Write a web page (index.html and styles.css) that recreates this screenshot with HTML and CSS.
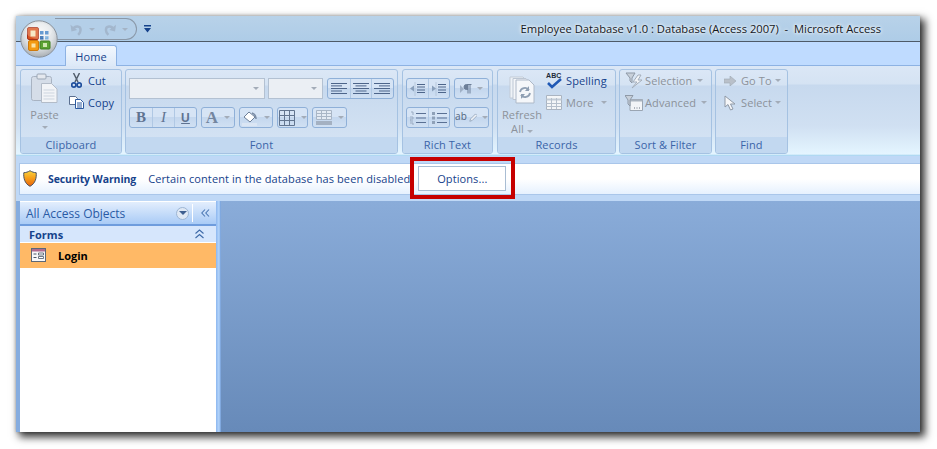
FILE: index.html
```html
<!DOCTYPE html>
<html lang="en">
<head>
<meta charset="utf-8">
<title>Employee Database v1.0</title>
<link rel="stylesheet" href="styles.css">
</head>
<body>
<div class="window">
  <div class="office-btn">
    <svg width="38" height="38" viewBox="0 0 38 38">
      <defs>
        <radialGradient id="orb" cx="50%" cy="35%" r="65%"><stop offset="0" stop-color="#fafafa"/><stop offset=".6" stop-color="#dfe3e6"/><stop offset="1" stop-color="#a9aeb3"/></radialGradient>
      </defs>
      <circle cx="19" cy="19" r="18.2" fill="url(#orb)" stroke="#8a929b"/>
      <rect x="7.500" y="7.500" width="11" height="12" rx="1.500" fill="#d9521c" stroke="#a8321a"/>
      <rect x="10.500" y="10.500" width="5" height="6" fill="#f5e3b8"/>
      <rect x="20" y="11" width="3.500" height="3.500" fill="#3d7fc4"/><rect x="25" y="11" width="3.500" height="3.500" fill="#3d7fc4"/>
      <rect x="20" y="16" width="3.500" height="3.500" fill="#1f5ea8"/><rect x="25" y="16" width="3.500" height="3.500" fill="#7fb2de"/>
      <rect x="8.500" y="20.500" width="10" height="10" rx="1.500" fill="#f39a12" stroke="#cf7a0c"/>
      <rect x="11.500" y="23.500" width="4" height="4" fill="#fbe3a6"/>
      <rect x="20" y="21" width="10" height="8" rx="1" fill="#5ba332" stroke="#3f7d20"/>
      <rect x="23" y="23" width="4" height="4" fill="#cfe8b0"/>
      <ellipse cx="19" cy="11" rx="13" ry="8" fill="#fff" opacity=".22"/>
    </svg>
  </div>

  <header class="titlebar">
    <div class="qat">
      <svg class="qat-icon" width="13" height="13" viewBox="0 0 13 13"><path d="M3.500 6C5 2.500 11 2.500 11 7c0 2-1 3.500-2.500 5" fill="none" stroke="#a3b7cd" stroke-width="2.600"/><path d="M.5 1.500l1 7 6-1.500z" fill="#a3b7cd"/></svg>
      <span class="qat-drop"></span>
      <svg class="qat-icon qat-redo" width="13" height="13" viewBox="0 0 13 13"><path d="M9.500 6C8 2.500 2 2.500 2 7c0 2 1 3.500 2.500 5" fill="none" stroke="#a3b7cd" stroke-width="2.600"/><path d="M12.500 1.500l-1 7-6-1.500z" fill="#a3b7cd"/></svg>
      <span class="qat-drop"></span>
    </div>
    <svg class="customize" width="7" height="8" viewBox="0 0 7 8"><path d="M0 0h7v1.500H0zM0 3h7L3.500 7.500z" fill="#15428b"/></svg>
    <div class="title">Employee Database v1.0 : Database (Access 2007)&nbsp; -&nbsp; Microsoft Access</div>
  </header>

  <nav class="tabs"><div class="tab">Home</div></nav>

  <section class="ribbon">
    <div class="group g-clip">
      <div class="g-body clip-body">
        <div class="big">
          <svg width="27" height="30" viewBox="0 0 27 30"><rect x=".5" y="3.500" width="20" height="24" rx="2" fill="#d5dde8" stroke="#a8b3c2"/><rect x="6" y="1" width="9" height="5" rx="1" fill="#e4e8ee" stroke="#9aa6b5"/><path d="M10.500 10.500h10l5.500 5.500v13.500H10.500z" fill="#f2f4f7" stroke="#b3bcc8"/><path d="M12.500 17h11M12.500 20h11M12.500 23h11M12.500 26h11" stroke="#cdd5df"/></svg>
          <span class="dis paste-l">Paste</span>
          <span class="caret c-paste"></span>
        </div>
        <div class="stack">
          <div class="item"><span class="ico"><svg width="11" height="15" viewBox="0 0 11 15"><path d="M2.500 0l4.500 9M8.500 0L4 9" stroke="#55606e" stroke-width="1.500"/><circle cx="2.800" cy="12" r="2.100" fill="none" stroke="#1e4e9c" stroke-width="1.700"/><circle cx="8.200" cy="12" r="2.100" fill="none" stroke="#1e4e9c" stroke-width="1.700"/></svg></span><span class="act">Cut</span></div>
          <div class="item"><span class="ico"><svg width="15" height="14" viewBox="0 0 15 14"><path d="M.5 1.500h6l2 2v6h-8z" fill="#fff" stroke="#5b6f90"/><path d="M6.500 4.500h5l3 3v6h-8z" fill="#fff" stroke="#2c5aa0"/><path d="M8 8h5M8 10h5M8 12h5" stroke="#2c5aa0"/></svg></span><span class="act">Copy</span></div>
        </div>
      </div>
      <div class="g-label">Clipboard</div>
    </div>

    <div class="group g-font">
      <div class="g-body col">
        <div class="row">
          <div class="combo c-name"><span class="caret"></span></div>
          <div class="combo c-size"><span class="caret"></span></div>
          <div class="btn">
            <span class="seg s-al"><svg width="16" height="12" viewBox="0 0 16 12"><path d="M0 .5h16M0 2.900h11M0 5.500h16M0 8h11M0 10.500h16" stroke="#4d658a"/></svg></span>
            <span class="seg s-al"><svg width="16" height="12" viewBox="0 0 16 12"><path d="M0 .5h16M2.500 2.900h11M0 5.500h16M2.500 8h11M0 10.500h16" stroke="#4d658a"/></svg></span>
            <span class="seg s-al"><svg width="16" height="12" viewBox="0 0 16 12"><path d="M0 .5h16M5 2.900h11M0 5.500h16M5 8h11M0 10.500h16" stroke="#4d658a"/></svg></span>
          </div>
        </div>
        <div class="row">
          <div class="btn">
            <span class="seg s-fmt fb">B</span>
            <span class="seg s-fmt fi">I</span>
            <span class="seg s-fmt fu">U</span>
          </div>
          <div class="btn w-a"><span class="big-a">A</span><span class="caret"></span></div>
          <div class="btn w-a">
            <svg width="16" height="16" viewBox="0 0 16 16"><path d="M2 7l5-5 6 5-5 5z" fill="#fff" stroke="#6d7f98"/><path d="M10 3c3 1 4 3 4 6" fill="none" stroke="#7a8ca5" stroke-width="1.500"/><rect x="0" y="13" width="15" height="3" fill="#dbe6f4"/></svg>
            <span class="caret"></span>
          </div>
          <div class="btn w-g">
            <svg width="16" height="16" viewBox="0 0 16 16"><path d="M.5.500h15v15H.5zM5.500.500v15M10.500.500v15M.5 5.500h15M.5 10.500h15" fill="none" stroke="#61748f"/></svg>
            <span class="caret"></span>
          </div>
          <div class="btn w-h">
            <svg width="16" height="16" viewBox="0 0 16 16"><path d="M.5.500h15v9H.5zM5.500.500v9M10.500.500v9M.5 3.500h15M.5 6.500h15" fill="#e4ebf4" stroke="#a9b6c6"/><rect y="11" width="16" height="4" fill="#a4b1c2"/></svg>
            <span class="caret"></span>
          </div>
        </div>
      </div>
      <div class="g-label">Font</div>
    </div>

    <div class="group g-rich">
      <div class="g-body col">
        <div class="row">
          <div class="btn">
            <span class="seg s-rt"><svg width="16" height="14" viewBox="0 0 16 14"><path d="M7 2.500h8M7 5h8M7 8h8M7 10.500h8" stroke="#4d658a" stroke-width="1.200"/><path d="M5 .5v13" stroke="#9fb0c6" stroke-dasharray="1 1"/><path d="M0 6.500l4-3v6z" fill="#8aa0bb"/></svg></span>
            <span class="seg s-rt"><svg width="16" height="14" viewBox="0 0 16 14"><path d="M7 2.500h8M7 5h8M7 8h8M7 10.500h8" stroke="#4d658a" stroke-width="1.200"/><path d="M5 .5v13" stroke="#9fb0c6" stroke-dasharray="1 1"/><path d="M5 6.500l-4-3v6z" fill="#8aa0bb"/></svg></span>
          </div>
          <div class="btn w-p">
            <svg width="12" height="10" viewBox="0 0 12 10"><path d="M0 1l4 4-4 4z" fill="#9fb0c6"/><path d="M10 .5v9M8 .5v9M8 .5H6.500a2.500 2.500 0 0 0 0 5H8M8 .5h3.500" stroke="#6d7f98" fill="#6d7f98"/></svg>
            <span class="caret"></span>
          </div>
        </div>
        <div class="row">
          <div class="btn">
            <span class="seg s-rt"><svg width="16" height="14" viewBox="0 0 16 14"><path d="M6 2.500h10M6 7h10M6 11.500h10" stroke="#5a7093" stroke-width="1.200"/><path d="M1 1h2v3M0 6h3v2H0v2h3M0 12h3v2" fill="none" stroke="#9aabc1"/></svg></span>
            <span class="seg s-rt"><svg width="16" height="14" viewBox="0 0 16 14"><path d="M6 2.500h10M6 7h10M6 11.500h10" stroke="#5a7093" stroke-width="1.200"/><rect x="1" y="1" width="3" height="3" fill="#8fa1b8"/><rect x="1" y="5.500" width="3" height="3" fill="#8fa1b8"/><rect x="1" y="10" width="3" height="3" fill="#8fa1b8"/></svg></span>
          </div>
          <div class="btn w-p">
            <span class="ab">ab</span><svg width="9" height="12" viewBox="0 0 10 12"><path d="M1 10l1-3 6-6 2 2-6 6z" fill="#eef2f7" stroke="#8fa1b8"/></svg>
            <span class="caret"></span>
          </div>
        </div>
      </div>
      <div class="g-label">Rich Text</div>
    </div>

    <div class="group g-rec">
      <div class="g-body rec-body">
        <div class="big refresh">
          <svg width="26" height="28" viewBox="0 0 26 28"><path d="M1 1h13l3 3v18H1z" fill="#eef2f7" stroke="#c2cbd7"/><path d="M4 2.500h13l3 3v18H4z" fill="#f4f6f9" stroke="#bcc6d3"/><path d="M7 4h13l5 5v18H7z" fill="#f5f7fa" stroke="#aeb9c8"/><path d="M11 16a5 5 0 0 1 9-2M21 17a5 5 0 0 1-9 2" fill="none" stroke="#8f9fb3" stroke-width="1.800"/><path d="M20 10v5h-4zM12 23v-5h4z" fill="#8f9fb3"/></svg>
          <span class="dis ref-1">Refresh</span>
          <span class="dis ref-2">All<span class="caret"></span></span>
        </div>
        <div class="stack">
          <div class="item"><span class="abc-wrap"><span class="abc">ABC</span><svg class="tick" width="15" height="11" viewBox="0 0 15 11"><path d="M1 5l4 4 9-8" fill="none" stroke="#2059b5" stroke-width="2.600"/></svg></span><span class="act">Spelling</span></div>
          <div class="item"><svg width="16" height="15" viewBox="0 0 16 15"><path d="M.5.500h15v14H.5z" fill="#f4f6f8" stroke="#aab4c1"/><path d="M.5 3.500h15v2H.5z" fill="#c2cbd6"/><path d="M.5 8.500h15M.5 11.500h15M5.500 3v11M10.500 3v11" stroke="#b6c0cc"/></svg><span class="dis">More</span><span class="caret"></span></div>
        </div>
      </div>
      <div class="g-label">Records</div>
    </div>

    <div class="group g-sort">
      <div class="g-body">
        <div class="stack">
          <div class="item"><svg width="18" height="17" viewBox="0 0 18 17"><path d="M1 1h9L7 6v5L5 9V6z" fill="#c8d0da" stroke="#8e99a7"/><path d="M13 3l-5 7h4l-5 6 10-8h-4l3-5z" fill="#f2f4f7" stroke="#a3adba"/></svg><span class="dis">Selection</span><span class="caret"></span></div>
          <div class="item"><svg width="18" height="16" viewBox="0 0 18 16"><path d="M5 4.500h12.500v11H5z" fill="#f2f4f7" stroke="#9aa5b2"/><path d="M5 4.500h12.500v2H5z" fill="#a9b3bf"/><path d="M9 13h1M11.500 13h1M14 13h1" stroke="#6b7583"/><path d="M0 .5h8L5 5v6L3 9V5z" fill="#c8d0da" stroke="#8e99a7"/></svg><span class="dis">Advanced</span><span class="caret"></span></div>
        </div>
      </div>
      <div class="g-label">Sort &amp; Filter</div>
    </div>

    <div class="group g-find">
      <div class="g-body">
        <div class="stack">
          <div class="item find"><svg width="12" height="10" viewBox="0 0 12 10"><path d="M0 3h6V0l6 5-6 5V7H0z" fill="#b9c0c9" stroke="#9ea7b2" stroke-width=".6"/></svg><span class="dis">Go To</span><span class="caret"></span></div>
          <div class="item find"><svg width="12" height="16" viewBox="0 0 12 16"><path d="M1 1v11l3-2.500L6.500 15l2.500-1-2.500-5H11z" fill="#f6f7f9" stroke="#8f99a6"/></svg><span class="dis">Select</span><span class="caret"></span></div>
        </div>
      </div>
      <div class="g-label">Find</div>
    </div>
  </section>

  <section class="security">
    <div class="sec-bar">
      <svg class="shield" width="14" height="17" viewBox="0 0 14 17"><defs><linearGradient id="sh" x1="0" y1="0" x2="0" y2="1"><stop offset="0" stop-color="#f9d33f"/><stop offset=".45" stop-color="#f7a21b"/><stop offset="1" stop-color="#e8620c"/></linearGradient></defs><path d="M7 .7C5 2 3 2.600 .8 2.700c-.4 5.500.8 10.800 6.200 13.600 5.400-2.800 6.600-8.100 6.200-13.600C11 2.600 9 2 7 .7z" fill="url(#sh)" stroke="#4a5260"/></svg>
      <strong class="sec-title">Security Warning</strong>
      <span class="sec-text">Certain content in the database has been disabled</span>
      <button class="options">Options...</button>
    </div>
  </section>

  <main class="workspace">
    <aside class="nav">
      <div class="nav-head">
        <span class="nav-title">All Access Objects</span>
        <span class="nav-drop"><span class="caret dark"></span></span>
        <span class="nav-sep"></span>
        <svg class="nav-col" width="9" height="8" viewBox="0 0 9 8"><path d="M4 .5L.8 4 4 7.500M8 .5L4.800 4 8 7.500" fill="none" stroke="#4c78b4" stroke-width="1.100"/></svg>
      </div>
      <div class="nav-forms">
        <span>Forms</span>
        <svg width="9" height="10" viewBox="0 0 9 10"><path d="M.5 4.500L4.500 1l4 3.500M.5 9L4.500 5.500l4 3.500" fill="none" stroke="#3e6aa8" stroke-width="1.100"/></svg>
      </div>
      <div class="nav-item">
        <svg width="15" height="14" viewBox="0 0 15 14"><rect x=".5" y=".5" width="14" height="13" fill="#f8f8fa" stroke="#5c6878"/><rect x="1" y="1" width="13" height="2.500" fill="#b06a8e"/><path d="M2.500 6h3M2.500 9.500h3" stroke="#4a5666"/><path d="M7.500 5h5v2h-5zM7.500 8.500h5v2h-5z" fill="#fff" stroke="#4a5666" stroke-width=".8"/></svg>
        <b>Login</b>
      </div>
    </aside>
    <div class="splitter"></div>
    <div class="canvas"></div>
  </main>

  <div class="highlight"></div>
</div>
</body>
</html>
```

FILE: styles.css
```css
* { box-sizing: border-box; }
html, body { margin: 0; height: 100%; background: #fff; overflow: hidden; }
body { padding: 16px 0 0 16px; font-family: "Open Sans", "Noto Sans", sans-serif; font-size: 11px; letter-spacing: .1px; color: #15428b; }
.window { position: relative; width: 904px; height: 416px; display: flex; flex-direction: column; background: #bfdbff; box-shadow: 4px 4px 8px 1px rgba(0,0,0,.8), 0 0 3px rgba(0,0,0,.25); }

.office-btn { position: absolute; left: 4px; top: 4px; width: 38px; height: 38px; z-index: 2; }

.titlebar { height: 26px; flex: none; display: flex; align-items: center; background: linear-gradient(#b8d2e9, #aecce7); border-bottom: 1px solid #4e5a68; }
.qat { margin-left: 39px; width: 82px; height: 22px; margin-top: 1px; padding-left: 15px; display: flex; align-items: center; border: 1px solid #8a98a8; border-left: 0; border-radius: 0 12px 12px 0; background: #b4cfe8; }
.qat-drop { margin: 0 8px 0 6px; width: 0; height: 0; border: 3px solid transparent; border-top: 3px solid #a4b4c6; border-bottom: 0; }
.qat-redo { margin-left: 1px; }
.customize { margin-left: 7px; }
.title { margin-left: auto; padding-right: 39px; font-size: 11.2px; letter-spacing: 0; color: #14181e; text-shadow: 0 0 5px #fff, 0 0 3px #fff; white-space: nowrap; }

.tabs { height: 24px; flex: none; padding: 3px 0 0 49px; display: flex; background: #bfdbff; border-bottom: 1px solid #8db2e3; }
.tab { width: 52px; height: 22px; display: flex; align-items: center; justify-content: center; background: linear-gradient(#f3f8fe, #dbe8f7); border: 1px solid #8db2e3; border-bottom: 0; border-radius: 3px 3px 0 0; color: #15428b; }

.ribbon { height: 90px; flex: none; padding: 3px 0 0 4px; display: flex; gap: 3px; background: linear-gradient(#dbe7f6 0, #d5e3f3 18px, #c7d9ee 19px, #d0e0f2 60px, #e4f5ff 88px, #9ed0ee 90px); }
.group { height: 85px; display: flex; flex-direction: column; border: 1px solid #a5c2e2; border-radius: 3px; background: linear-gradient(#dbe7f6 0, #d5e3f3 15px, #c7d9ee 16px, #d3e2f3 69px); overflow: hidden; flex: none; }
.g-body { flex: 1; position: relative; min-height: 0; }
.g-label { height: 16px; flex: none; text-align: center; line-height: 15px; background: #c2d8f0; color: #3a64a8; }
.g-clip { width: 102px; }
.g-font { width: 273px; }
.g-rich { width: 91px; margin-left: 1px; }
.g-rec { width: 119px; margin-left: 1px; }
.g-sort { width: 93px; }
.g-find { width: 73px; }

.col { display: flex; flex-direction: column; gap: 8px; padding: 8px 0 0 3px; }
.row { display: flex; gap: 4px; height: 21px; }

.btn { height: 21px; flex: none; display: flex; align-items: center; justify-content: center; gap: 3px; border: 1px solid #8fb0d8; border-radius: 3px; background: linear-gradient(#d6e4f5 0, #d6e4f5 45%, #c4d7ee 50%, #d0e0f3 100%); }
.seg { height: 19px; display: flex; align-items: center; justify-content: center; border-left: 1px solid #b0c8e4; }
.seg:first-child { border-left: 0; }
.btn:has(> .seg) { gap: 0; }
.s-al { width: 21.6px; }
.s-fmt { width: 22px; font-family: "Liberation Serif", serif; font-size: 15px; color: #5f7391; }
.fb { font-weight: 700; }
.fi { font-style: italic; }
.fu { text-decoration: underline; font-weight: 700; font-family: "Liberation Sans", sans-serif; font-size: 12px; }
.s-rt { width: 21px; }
.w-a { width: 34px; }
.w-g { width: 31px; }
.w-h { width: 35px; }
.w-p { width: 35px; gap: 2px; }
.big-a { font: 700 17px "Liberation Serif", serif; color: #7486a0; }
.ab { font-size: 10px; color: #51647f; line-height: 10px; margin-bottom: 3px; }

.combo { height: 21px; flex: none; display: flex; align-items: center; justify-content: flex-end; padding-right: 5px; background: #ebeff4; border: 1px solid #b3c1d2; }
.c-name { width: 136px; margin-right: -1px; }
.c-size { width: 55px; }

.caret { display: inline-block; width: 0; height: 0; border: 3px solid transparent; border-top: 3px solid #a3acb8; border-bottom: 0; margin-left: 3px; flex: none; }
.caret.dark { border-top-color: #3f5f8f; margin: 0; border-width: 4px; border-bottom: 0; }

.clip-body, .rec-body { display: flex; }
.big { display: flex; flex-direction: column; align-items: center; flex: none; }
.clip-body .big { width: 44px; padding: 3px 0 0 3px; }
.paste-l { margin-top: 4px; line-height: 15px; }
.c-paste { margin: 4px 0 0; }
.refresh { width: 48px; padding: 6px 0 0; }
.ref-1 { line-height: 14px; margin-top: 4px; }
.ref-2 { line-height: 13px; }
.dis { color: #8c929a; }
.act { color: #15428b; }

.stack { display: flex; flex-direction: column; gap: 6px; padding-top: 2px; }
.item { height: 16px; display: flex; align-items: center; gap: 4px; white-space: nowrap; }
.ico { width: 21px; margin-left: 1px; flex: none; display: flex; justify-content: center; }
.clip-body .item { gap: 1px; }
.abc-wrap { position: relative; width: 16px; height: 15px; display: block; flex: none; }
.abc { position: absolute; left: 0; top: -1px; font: 700 7px "Liberation Sans", sans-serif; color: #222b3a; }
.tick { position: absolute; left: 1px; top: 5px; }
.g-sort .stack { padding: 2px 0 0 5px; gap: 5px; }
.g-sort .item { gap: 2px; height: 17px; }
.g-find .stack { padding: 2px 0 0 8px; gap: 5px; }
.g-find .item { height: 17px; gap: 0; }
.g-find .item svg { margin-right: 5px; }

.security { height: 45px; flex: none; padding: 7px 0 0 3px; background: #bfd8f6; }
.sec-bar { height: 32px; display: flex; align-items: center; padding: 0 0 1px 3px; background: linear-gradient(#fff 50%, #e6f1fe); border: 1px solid #a9c6ea; border-right: 0; }
.shield { flex: none; margin-right: 11px; }
.sec-title { font-weight: 700; font-size: 10.5px; letter-spacing: -.1px; color: #15428b; }
.sec-text { margin-left: 12px; }
.options { width: 88px; height: 25px; margin-left: 8px; padding: 0; background: #fff; border: 1px solid #a9bdd3; border-radius: 0; font: inherit; letter-spacing: inherit; color: #15428b; }

.workspace { flex: 1; min-height: 0; display: flex; }
.nav { width: 200px; flex: none; background: #fff; border-left: 4px solid #85acdf; display: flex; flex-direction: column; }
.nav-head { height: 24px; flex: none; padding-left: 6px; display: flex; align-items: center; background: linear-gradient(#e3eefd, #a9cbf6); border-bottom: 2px solid #6e9cdd; margin-top: 1px; }
.nav-title { font-size: 12px; letter-spacing: 0; color: #2a5ba5; flex: 1; }
.nav-drop { width: 13px; height: 13px; border-radius: 50%; background: #dfe8f4; border: 1px solid #9db5d3; display: flex; align-items: center; justify-content: center; }
.nav-sep { width: 1px; height: 18px; background: #fff; margin: 0 8px 0 3px; }
.nav-col { margin-right: 6px; }
.nav-forms { height: 17px; flex: none; padding: 0 12px 0 9px; display: flex; align-items: center; justify-content: space-between; background: #d6e6fc; border-bottom: 1px solid #fff; font-weight: 700; color: #15428b; letter-spacing: 0; }
.nav-item { height: 25px; flex: none; padding: 0 0 1px 11px; display: flex; align-items: center; gap: 12px; background: #ffb966; color: #000; letter-spacing: 0; }
.nav-item b { font-weight: 700; }
.splitter { width: 5px; flex: none; background: linear-gradient(90deg, #8db7ef, #b4d5fb 60%, #6f9ad6); }
.canvas { flex: 1; background: linear-gradient(#8aacd9, #678ab9); }

.highlight { position: absolute; left: 394px; top: 141px; width: 105px; height: 42px; border: 4px solid #c60000; pointer-events: none; }
```
